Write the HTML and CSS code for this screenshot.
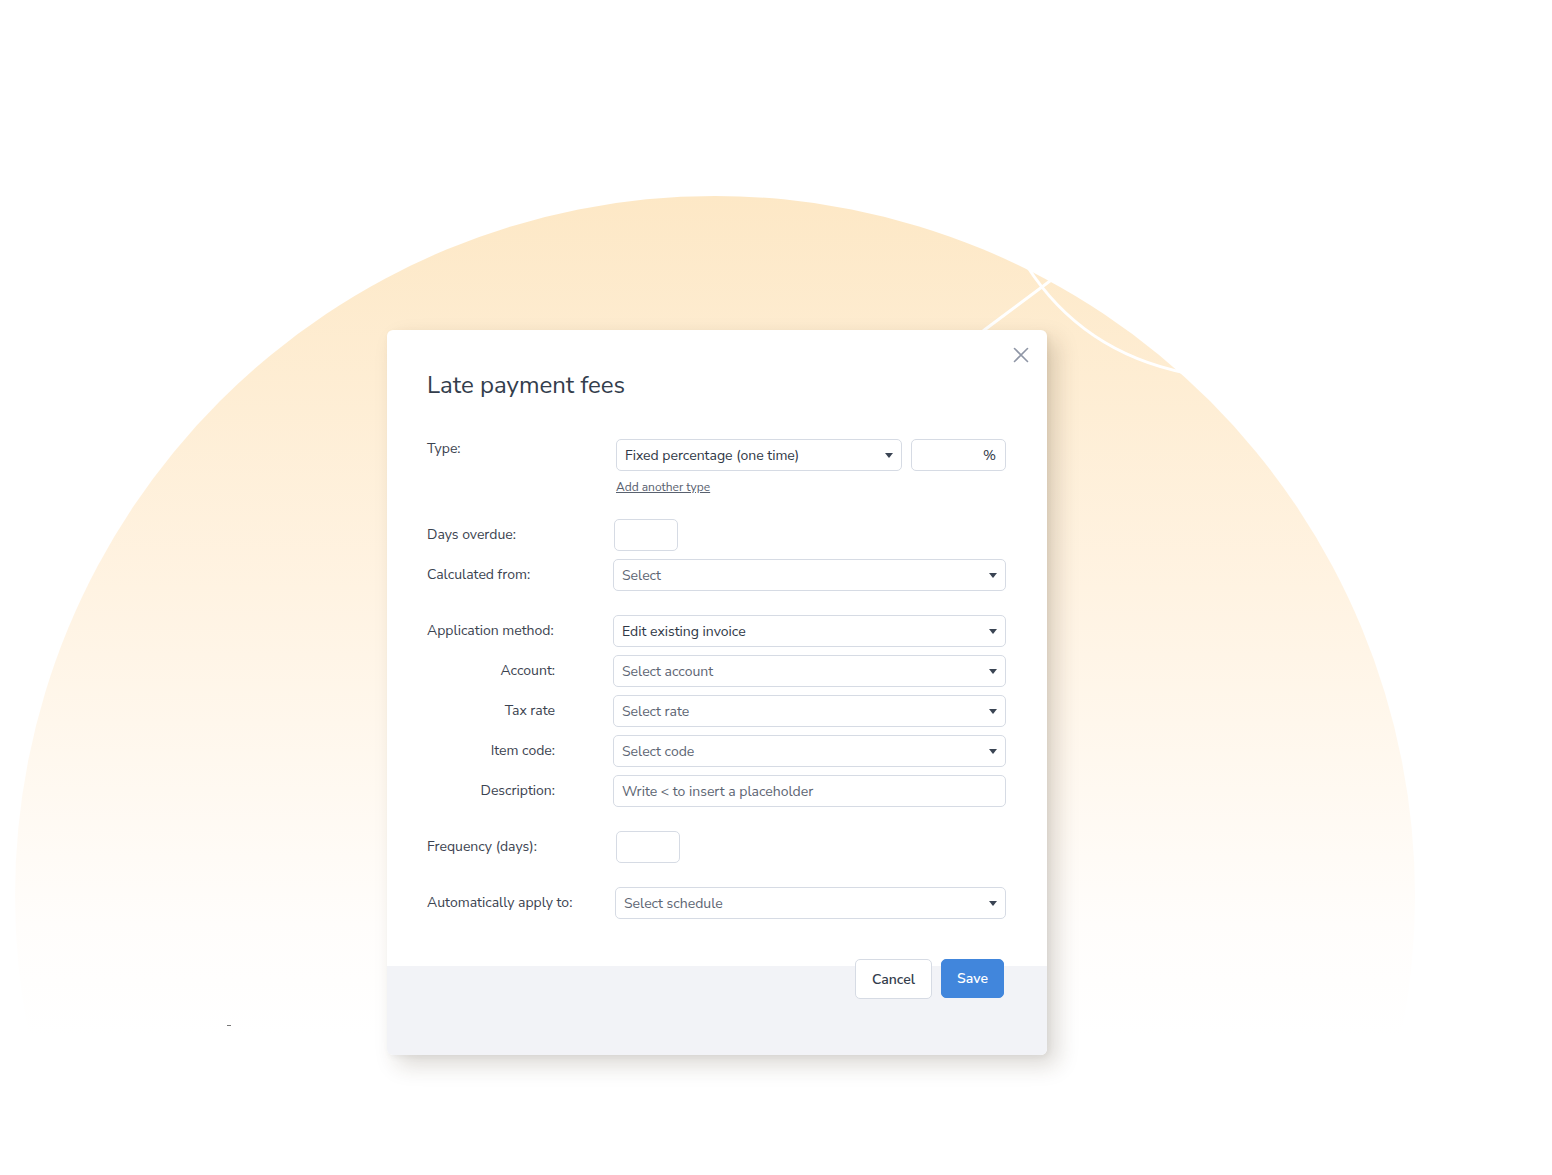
FILE: index.html
```html
<!DOCTYPE html>
<html lang="en">
<head>
<meta charset="utf-8">
<title>Late payment fees</title>
<link rel="stylesheet" href="styles.css">
</head>
<body>
<div class="page">
<div class="bg-circle"></div>
<svg class="bg-lines" width="1552" height="1175" viewBox="0 0 1552 1175">
  <path d="M1027 266 Q1082 352 1186 373" fill="none" stroke="#fff" stroke-width="3"/>
  <path d="M983 331 L1062 272" fill="none" stroke="#fff" stroke-width="3"/>
</svg>
<span class="stray-dash"></span>
<main class="stage">
  <div class="dialog">
    <button class="close" aria-label="Close">
      <svg width="16" height="16" viewBox="0 0 16 16"><path d="M1.5 1.5 L14.5 14.5 M14.5 1.5 L1.5 14.5" stroke="#8f96a6" stroke-width="1.6" fill="none" stroke-linecap="round"/></svg>
    </button>
    <div class="content">
      <h1 class="title">Late payment fees</h1>

      <div class="row row-top">
        <div class="lbl">Type:</div>
        <div class="ctrl ctrl-type">
          <div class="type-line">
            <div class="field select w-type"><span class="val">Fixed percentage (one time)</span><span class="caret"></span></div>
            <div class="field pct"><span class="val">%</span></div>
          </div>
          <a class="add" href="#">Add another type</a>
        </div>
      </div>

      <div class="row gap-l">
        <div class="lbl">Days overdue:</div>
        <div class="field small off-1"></div>
      </div>

      <div class="row gap-s">
        <div class="lbl">Calculated from:</div>
        <div class="field select grow"><span class="ph">Select</span><span class="caret"></span></div>
      </div>

      <div class="row gap-l">
        <div class="lbl">Application method:</div>
        <div class="field select grow"><span class="val">Edit existing invoice</span><span class="caret"></span></div>
      </div>

      <div class="row gap-s">
        <div class="lbl sub">Account:</div>
        <div class="field select grow"><span class="ph">Select account</span><span class="caret"></span></div>
      </div>

      <div class="row gap-s">
        <div class="lbl sub">Tax rate</div>
        <div class="field select grow"><span class="ph">Select rate</span><span class="caret"></span></div>
      </div>

      <div class="row gap-s">
        <div class="lbl sub">Item code:</div>
        <div class="field select grow"><span class="ph">Select code</span><span class="caret"></span></div>
      </div>

      <div class="row gap-s">
        <div class="lbl sub">Description:</div>
        <div class="field grow"><span class="ph">Write &lt; to insert a placeholder</span></div>
      </div>

      <div class="row gap-l">
        <div class="lbl">Frequency (days):</div>
        <div class="field small off-3"></div>
      </div>

      <div class="row gap-l">
        <div class="lbl">Automatically apply to:</div>
        <div class="field select grow off-2"><span class="ph">Select schedule</span><span class="caret"></span></div>
      </div>
    </div>
    <div class="footer">
      <button class="btn btn-cancel">Cancel</button>
      <button class="btn btn-save">Save</button>
    </div>
  </div>
</main>
</div>
</body>
</html>
```

FILE: styles.css
```css
* { box-sizing: border-box; }
html, body {
  margin: 0;
  padding: 0;
  overflow: hidden;
}
body {
  background: #ffffff;
  font-family: "Nunito Sans", "Lato", "Noto Sans", sans-serif;
  color: #3b4350;
}
.page {
  width: 1552px;
  height: 1175px;
  overflow: hidden;
  position: relative;
}
.bg-circle {
  position: absolute;
  left: 15px;
  top: 196px;
  width: 1400px;
  height: 1400px;
  border-radius: 50%;
  background: linear-gradient(180deg, #fde8c6 0%, #fff3e2 28%, #fffdfb 52%, #ffffff 60%);
}
.bg-lines {
  position: absolute;
  left: 0;
  top: 0;
}
.stray-dash {
  position: absolute;
  left: 227px;
  top: 1025px;
  width: 4px;
  height: 1px;
  background: #777;
}
.stage {
  position: relative;
  padding: 330px 0 0 387px;
}
.dialog {
  position: relative;
  width: 660px;
  height: 725px;
  background: #ffffff;
  border-radius: 6px;
  box-shadow: 10px 10px 22px rgba(60, 45, 20, 0.18), 2px 2px 6px rgba(0,0,0,0.05);
  display: flex;
  flex-direction: column;
}
.close {
  position: absolute;
  right: 18px;
  top: 17px;
  width: 16px;
  height: 16px;
  padding: 0;
  border: 0;
  background: transparent;
  display: flex;
}
.content {
  padding: 39px 41px 0 40px;
  flex: 1;
}
.title {
  margin: 0;
  font-size: 24px;
  line-height: 32px;
  font-weight: 400;
  color: #333d4c;
}
.row {
  display: flex;
  align-items: center;
}
.row-top {
  align-items: flex-start;
  margin-top: 38px;
}
.gap-l { margin-top: 24px; }
.gap-s { margin-top: 8px; }
.lbl {
  width: 186px;
  flex: none;
  font-size: 14px;
  line-height: 20px;
  color: #3b4350;
}
.lbl.sub {
  width: 128px;
  margin-right: 58px;
  text-align: right;
}
.ctrl-type {
  margin-left: 3px;
  flex: 1;
}
.type-line {
  display: flex;
  gap: 9px;
}
.field {
  height: 32px;
  border: 1px solid #d6dbe4;
  border-radius: 5px;
  background: #fff;
  display: flex;
  align-items: center;
  padding: 0 8px 0 8px;
  font-size: 14px;
}
.grow { flex: 1; }
.w-type { width: 286px; flex: none; }
.pct {
  width: 95px;
  flex: none;
  justify-content: flex-end;
  padding-right: 9px;
}
.small { width: 64px; }
.off-1 { margin-left: 1px; }
.off-2 { margin-left: 2px; }
.off-3 { margin-left: 3px; }
.val {
  color: #2f3846;
  flex: 1;
  white-space: nowrap;
}
.pct .val { flex: none; }
.ph {
  color: #5d6573;
  flex: 1;
  white-space: nowrap;
}
.caret {
  width: 0;
  height: 0;
  border-left: 4px solid transparent;
  border-right: 4px solid transparent;
  border-top: 5px solid #3a4453;
  flex: none;
}
.add {
  display: block;
  width: max-content;
  margin-top: 8px;
  font-size: 12px;
  line-height: 16px;
  color: #59616f;
  text-decoration: underline;
}
.footer {
  height: 89px;
  background: #f2f3f7;
  border-radius: 0 0 6px 6px;
  display: flex;
  justify-content: flex-end;
  align-items: flex-start;
  gap: 9px;
  padding-right: 43px;
}
.btn {
  margin-top: -7px;
  height: 40px;
  border-radius: 5px;
  font-family: inherit;
  font-size: 14px;
  font-weight: 600;
  padding: 0;
}
.btn-cancel {
  width: 77px;
  background: #fff;
  border: 1px solid #d6dbe4;
  color: #333d4c;
}
.btn-save {
  width: 63px;
  height: 39px;
  background: #4186dc;
  border: 1px solid #4186dc;
  color: #fff;
}
```
